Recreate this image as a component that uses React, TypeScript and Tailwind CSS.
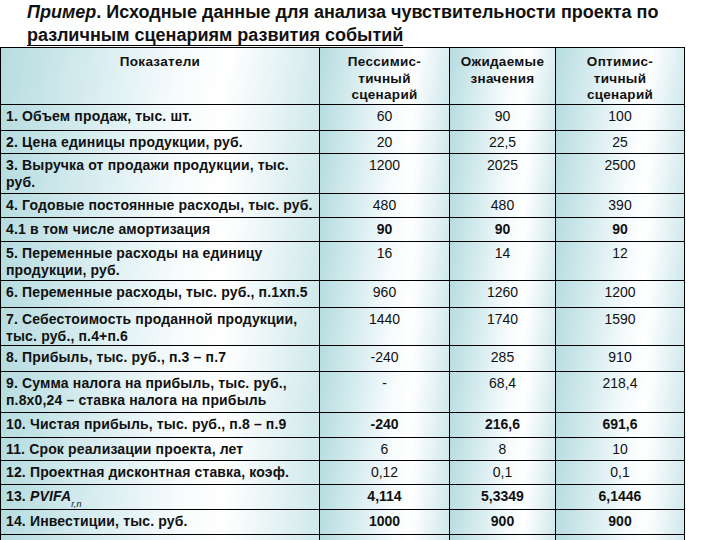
import React from "react";

type Row = {
  label: React.ReactNode;
  vals: string[];
  h: string;
  bold?: boolean;
};

const rows: Row[] = [
  { label: "1. Объем продаж, тыс. шт.", vals: ["60", "90", "100"], h: "h-[26px]" },
  { label: "2. Цена единицы продукции, руб.", vals: ["20", "22,5", "25"], h: "h-[23px]" },
  { label: <>3. Выручка от продажи продукции, тыс.<br />руб.</>, vals: ["1200", "2025", "2500"], h: "h-[40px]" },
  { label: "4. Годовые постоянные расходы, тыс. руб.", vals: ["480", "480", "390"], h: "h-[24px]" },
  { label: "4.1 в том числе амортизация", vals: ["90", "90", "90"], h: "h-[24px]", bold: true },
  { label: <>5. Переменные расходы на единицу<br />продукции, руб.</>, vals: ["16", "14", "12"], h: "h-[39px]" },
  { label: "6. Переменные расходы, тыс. руб., п.1хп.5", vals: ["960", "1260", "1200"], h: "h-[27px]" },
  { label: <>7. Себестоимость проданной продукции,<br />тыс. руб., п.4+п.6</>, vals: ["1440", "1740", "1590"], h: "h-[38px]" },
  { label: "8. Прибыль, тыс. руб., п.3 – п.7", vals: ["-240", "285", "910"], h: "h-[26px]" },
  { label: <>9. Сумма налога на прибыль, тыс. руб.,<br />п.8х0,24 – ставка налога на прибыль</>, vals: ["-", "68,4", "218,4"], h: "h-[41px]" },
  { label: "10. Чистая прибыль, тыс. руб., п.8 – п.9", vals: ["-240", "216,6", "691,6"], h: "h-[25px]", bold: true },
  { label: "11. Срок реализации проекта, лет", vals: ["6", "8", "10"], h: "h-[23px]" },
  { label: "12. Проектная дисконтная ставка, коэф.", vals: ["0,12", "0,1", "0,1"], h: "h-[24px]" },
  {
    label: (
      <>
        13. <i>PVIFA</i>
        <sub className="text-[9px] italic font-normal align-[-4px]">r,n</sub>
      </>
    ),
    vals: ["4,114", "5,3349", "6,1446"],
    h: "h-[25px]",
    bold: true,
  },
  { label: "14. Инвестиции, тыс. руб.", vals: ["1000", "900", "900"], h: "h-[25px]", bold: true },
  { label: "", vals: ["", "", ""], h: "h-[20px]" },
];

const cellBg =
  "bg-[linear-gradient(100deg,#b6dce0_0%,#d8edf0_30%,#f6fbfc_55%,#ffffff_70%,#cfe8eb_100%)]";

const widths = ["w-[319px]", "w-[130px]", "w-[106px]", "w-[129px]"];

export default function App() {
  return (
    <div
      className="w-[720px] h-[540px] overflow-hidden bg-white text-[#111]"
      style={{ fontFamily: '"Liberation Sans", Arial, sans-serif' }}
    >
      <div className="pl-[27px] pt-[1px] text-[18px] leading-[23px] font-bold h-[47px]">
        <div className="whitespace-nowrap">
          <i>Пример</i>. Исходные данные для анализа чувствительности проекта по
        </div>
        <div className="whitespace-nowrap">
          <span className="border-b border-black">различным сценариям развития событий</span>
        </div>
      </div>
      <div className="flex flex-col w-[685px] border-l border-t border-black">
        <div className="flex h-[57px]">
          {["Показатели", <>Пессимис-<br />тичный<br />сценарий</>, <>Ожидаемые<br />значения</>, <>Оптимис-<br />тичный<br />сценарий</>].map(
            (t, i) => (
              <div
                key={i}
                className={`${widths[i]} shrink-0 border-r border-b border-black ${cellBg} text-center font-bold text-[13.5px] tracking-[0.3px] leading-[16.5px] pt-[6px]`}
              >
                {t}
              </div>
            )
          )}
        </div>
        {rows.map((r, ri) => (
          <div key={ri} className={`flex ${r.h}`}>
            <div
              className={`${widths[0]} shrink-0 border-r border-b border-black ${cellBg} pl-[5px] pt-[3px] font-bold text-[14px] tracking-[0.15px] leading-[17px] whitespace-nowrap`}
            >
              {r.label}
            </div>
            {r.vals.map((v, vi) => (
              <div
                key={vi}
                className={`${widths[vi + 1]} shrink-0 border-r border-b border-black ${cellBg} text-center pt-[3px] text-[14px] leading-[17px] ${
                  r.bold ? "font-bold" : "font-normal"
                }`}
              >
                {v}
              </div>
            ))}
          </div>
        ))}
      </div>
    </div>
  );
}
